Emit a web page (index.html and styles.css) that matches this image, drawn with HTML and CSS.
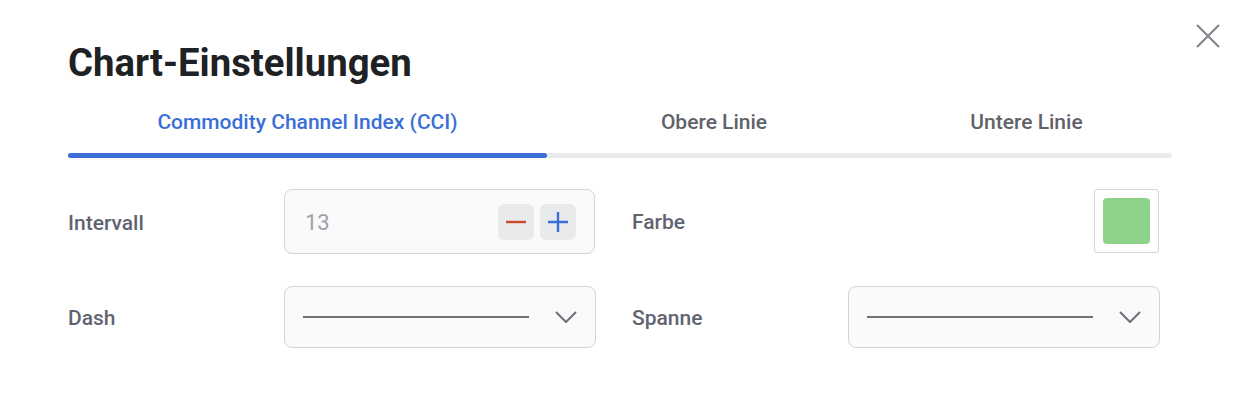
FILE: index.html
```html
<!DOCTYPE html>
<html lang="de">
<head>
<meta charset="utf-8">
<title>Chart-Einstellungen</title>
<link rel="stylesheet" href="styles.css">
</head>
<body>
<div class="dialog">
  <button class="close" aria-label="Schließen">
    <svg width="24" height="24" viewBox="0 0 24 24"><path d="M1 1L23 23M23 1L1 23" stroke="#80848c" stroke-width="2" fill="none"/></svg>
  </button>
  <h1 class="title">Chart-Einstellungen</h1>
  <div class="tabs">
    <div class="tab active">Commodity Channel Index (CCI)</div>
    <div class="tab">Obere Linie</div>
    <div class="tab">Untere Linie</div>
  </div>
  <div class="track"><div class="indicator"></div></div>
  <div class="form">
    <div class="field">
      <span class="label">Intervall</span>
      <div class="control number">
        <span class="value">13</span>
        <div class="steppers">
          <button class="step"><svg width="22" height="22" viewBox="0 0 22 22"><path d="M1 11H21" stroke="#d2472b" stroke-width="2.4"/></svg></button>
          <button class="step"><svg width="22" height="22" viewBox="0 0 22 22"><path d="M1 11H21M11 1V21" stroke="#3a6fd6" stroke-width="2.4"/></svg></button>
        </div>
      </div>
    </div>
    <div class="field">
      <span class="label">Farbe</span>
      <div class="swatch-wrap"><div class="swatch"></div></div>
    </div>
    <div class="field">
      <span class="label">Dash</span>
      <div class="control select">
        <span class="line"></span>
        <svg class="chev" width="22" height="12" viewBox="0 0 22 12"><path d="M1 1L11 11L21 1" stroke="#6b7079" stroke-width="2" fill="none"/></svg>
      </div>
    </div>
    <div class="field">
      <span class="label">Spanne</span>
      <div class="control select">
        <span class="line"></span>
        <svg class="chev" width="22" height="12" viewBox="0 0 22 12"><path d="M1 1L11 11L21 1" stroke="#6b7079" stroke-width="2" fill="none"/></svg>
      </div>
    </div>
  </div>
</div>
</body>
</html>
```

FILE: styles.css
```css
* { box-sizing: border-box; }
html, body { margin: 0; padding: 0; background: #fff; }
body { font-family: Roboto, "Noto Sans", sans-serif; }

.dialog {
  position: relative;
  width: 1246px;
  height: 404px;
  padding: 38px 74px 0 68px;
}

.close {
  position: absolute;
  top: 24px;
  left: 1196px;
  width: 24px;
  height: 24px;
  padding: 0;
  border: 0;
  background: none;
  line-height: 0;
}

.title {
  margin: 0;
  font-size: 38.3px;
  line-height: 50px;
  font-weight: 700;
  color: #202124;
}

.tabs {
  display: grid;
  grid-template-columns: 479px 334px 291px;
  margin-top: 21px;
  height: 26px;
}
.tab {
  text-align: center;
  font-size: 21px;
  line-height: 26px;
  font-weight: 500;
  color: #5f6369;
}
.tab.active { color: #3a6fd6; }

.track {
  margin-top: 18px;
  height: 5px;
  width: 1104px;
  background: #e9eaec;
  border-radius: 3px;
}
.indicator {
  width: 479px;
  height: 5px;
  background: #3a6fd6;
  border-radius: 3px;
}

.form {
  display: grid;
  grid-template-columns: 527px 527px;
  column-gap: 37px;
  row-gap: 32px;
  margin-top: 31px;
}
.field {
  display: grid;
  grid-template-columns: 216px 1fr;
  align-items: center;
  height: 64px;
}
.label {
  padding-top: 2px;
  font-size: 21px;
  font-weight: 500;
  color: #5f6470;
}

.control {
  height: 64px;
  border: 1px solid #d3d4d6;
  border-radius: 8px;
  background: #fafafa;
  display: flex;
  align-items: center;
}
.number { padding: 0 18px 0 20px; justify-content: space-between; height: 65px; }
.value { font-size: 22px; color: #9ea2a8; padding-top: 2px; }
.steppers { display: flex; gap: 6px; }
.step {
  width: 36px;
  height: 36px;
  border: 0;
  padding: 0;
  border-radius: 6px;
  background: #e9eaec;
  display: flex;
  align-items: center;
  justify-content: center;
}

.select { padding: 0 18px 0 18px; height: 62px; }
.line {
  width: 226px;
  height: 2px;
  background: #707070;
}
.chev { margin-left: 26px; }

.swatch-wrap {
  justify-self: end;
  width: 65px;
  height: 64px;
  border: 1px solid #d3d4d6;
  border-radius: 3px;
  padding: 8px;
  background: #fff;
}
.swatch {
  width: 100%;
  height: 100%;
  background: #8fd38b;
  border-radius: 4px;
}
```
